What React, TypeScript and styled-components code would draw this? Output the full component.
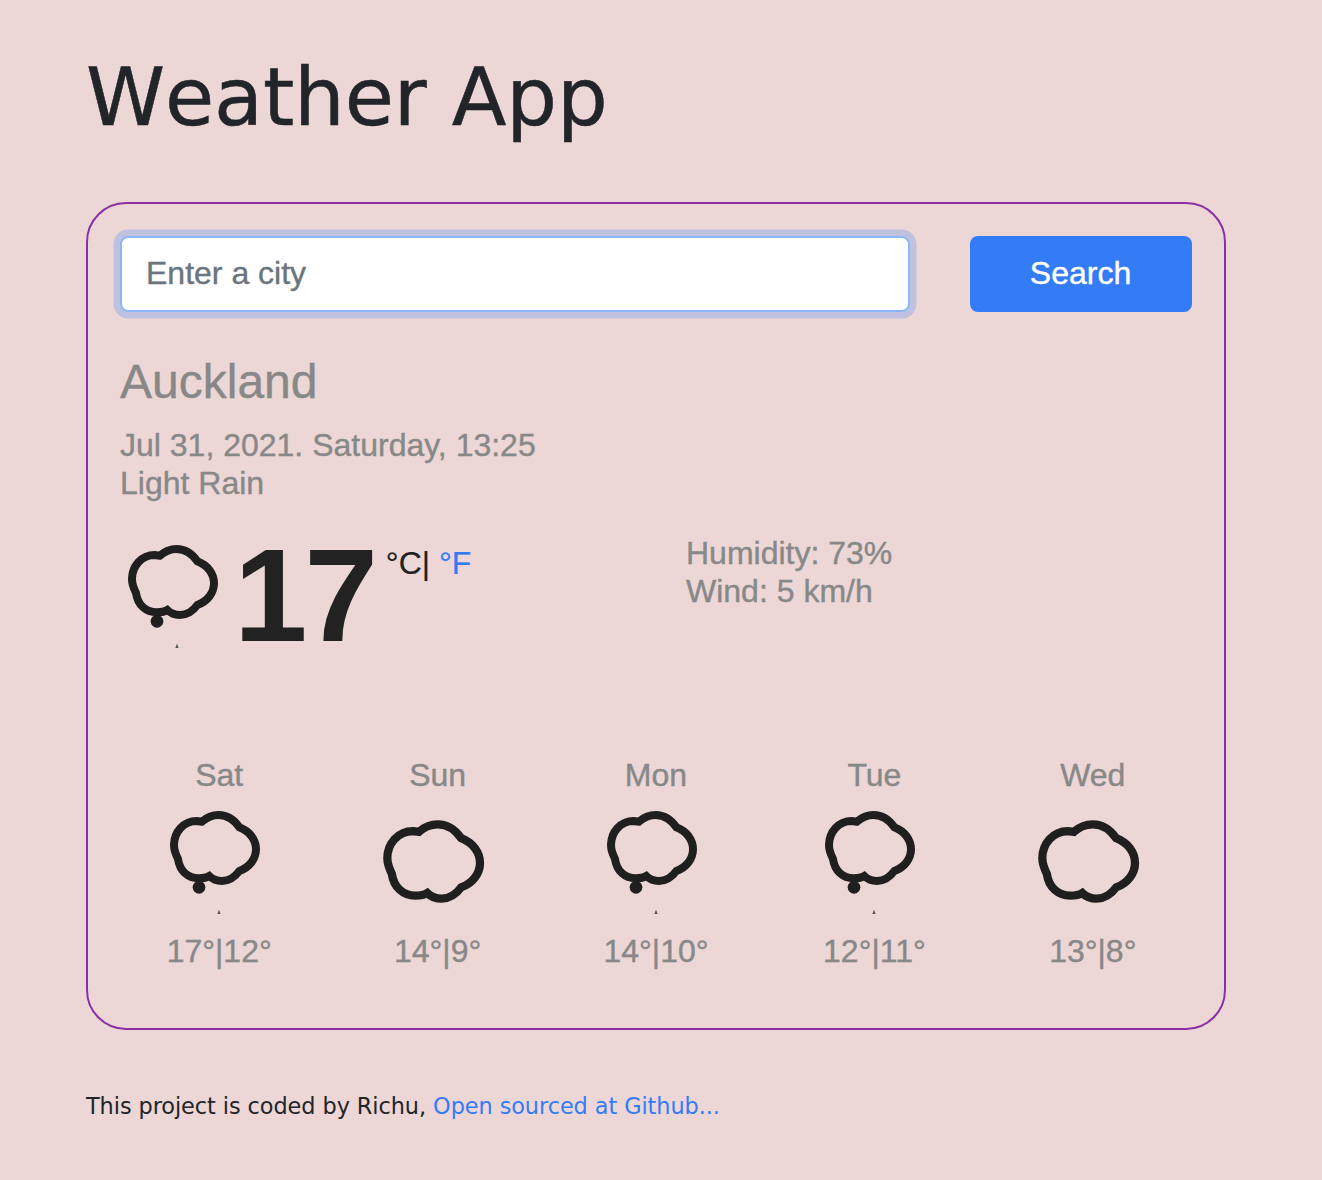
import React from "react";
import styled, { createGlobalStyle } from "styled-components";

const GlobalStyle = createGlobalStyle`
  *, *::before, *::after { box-sizing: border-box; }
  body {
    margin: 0;
    min-height: 1180px;
    background: #ecd7d6;
    color: #212529;
    font-family: "Liberation Sans", Arial, sans-serif;
    font-size: 32px;
    line-height: 38px;
  }
`;

const Page = styled.main`
  width: 1140px;
  margin-left: 86px;
  padding-top: 50px;
`;

const Title = styled.h1`
  margin: 0 0 56px;
  font: 400 80px/96px "DejaVu Sans", Verdana, sans-serif;
  font-kerning: none;
  letter-spacing: -0.15px;
  white-space: nowrap;
  -webkit-text-stroke: 0.5px;
`;

const Card = styled.section`
  height: 828px;
  padding: 32px;
  border: 2px solid #8a30a4;
  border-radius: 40px;
  color: #888888;
  -webkit-text-stroke: 0.4px;
`;

const SearchForm = styled.form`
  display: flex;
  gap: 60px;
  height: 76px;
  margin-bottom: 41px;
`;

const CityInput = styled.input`
  width: 790px;
  padding: 0 24px 2px;
  border: 2px solid #8ab9fb;
  border-radius: 8px;
  outline: none;
  background: #fff;
  box-shadow: 0 0 0 6.4px rgba(51, 124, 246, 0.24);
  font: inherit;
  &::placeholder { color: #6c757d; opacity: 1; }
`;

const SearchButton = styled.button`
  flex: 1;
  padding: 0 1px 2px 0;
  border: 0;
  border-radius: 8px;
  background: #347cf6;
  color: #fff;
  font: inherit;
`;

const City = styled.h2`
  margin: 0 0 15px;
  font-size: 48px;
  font-weight: 400;
  line-height: 58px;
`;

const Lines = styled.div`
  display: flex;
  flex-direction: column;
`;

const Current = styled.div`
  display: grid;
  grid-template-columns: 566px 1fr;
  height: 222px;
  padding-top: 32px;
`;

const Reading = styled.div`
  display: flex;
  align-items: flex-start;
  color: #222;
`;

const Degrees = styled.strong`
  margin: -2px 0 0 0;
  font-size: 132px;
  line-height: 128px;
  letter-spacing: -3px;
  -webkit-text-stroke: 0;
`;

const Units = styled.span`
  margin: 10px 0 0 11px;
  -webkit-text-stroke: 0.2px;
`;

const Link = styled.a`
  color: #347cf6;
  text-decoration: none;
`;

const Forecast = styled.div`
  display: grid;
  grid-template-columns: repeat(5, 1fr);
  margin: 32px -10px 0;
`;

const Day = styled.div`
  display: flex;
  flex-direction: column;
  align-items: center;
`;

const Icon = styled.svg<{ $top: number; $bottom: number }>`
  display: block;
  flex: none;
  width: 114px;
  height: 120px;
  margin: ${(p) => p.$top}px 0 ${(p) => p.$bottom}px;
`;

const Footer = styled.footer`
  margin-top: 59px;
  font: 22.4px/34px "DejaVu Sans", Verdana, sans-serif;
  letter-spacing: -0.07px;
  white-space: nowrap;
`;

type Sky = "rain" | "cloud";

interface IconProps {
  sky: Sky;
  top?: number;
  bottom?: number;
}

const cloudPath =
  "M120 62L104 60C64 60 36 94 36 132C36 148 41 160 48 174C53 210 78 232 110 232C124 232 134 230 142 225C152 235 166 240 180 240C202 240 218 229 232 210C263 199 282 173 282 145C282 116 263 91 232 79C215 54 196 42 170 42C149 42 133 50 120 62Z";

function WeatherIcon({ sky, top = 0, bottom = 0 }: IconProps) {
  return (
    <Icon $top={top} $bottom={bottom} viewBox="0 0 342 360" aria-hidden="true">
      {sky === "rain" ? (
        <g>
          <path d={cloudPath} fill="none" stroke="#1f1f1f" strokeWidth="24" />
          <circle cx="111" cy="259" r="19" fill="#1f1f1f" />
          <path d="M171 326L176 339H166Z" fill="#555" />
        </g>
      ) : (
        <path
          d={cloudPath}
          transform="translate(-21.7 22.5) scale(1.13 1.127)"
          fill="none"
          stroke="#1f1f1f"
          strokeWidth="22"
        />
      )}
    </Icon>
  );
}

const days: { name: string; sky: Sky; max: number; min: number }[] = [
  { name: "Sat", sky: "rain", max: 17, min: 12 },
  { name: "Sun", sky: "cloud", max: 14, min: 9 },
  { name: "Mon", sky: "rain", max: 14, min: 10 },
  { name: "Tue", sky: "rain", max: 12, min: 11 },
  { name: "Wed", sky: "cloud", max: 13, min: 8 },
];

export default function App() {
  return (
    <>
      <GlobalStyle />
      <Page>
        <Title>Weather App</Title>
        <Card>
          <SearchForm onSubmit={(e) => e.preventDefault()}>
            <CityInput placeholder="Enter a city" />
            <SearchButton>Search</SearchButton>
          </SearchForm>
          <City>Auckland</City>
          <Lines>
            <span>Jul 31, 2021. Saturday, 13:25</span>
            <span>Light Rain</span>
          </Lines>
          <Current>
            <Reading>
              <WeatherIcon sky="rain" top={1} />
              <Degrees>17</Degrees>
              <Units>
                °C| <Link href="#">°F</Link>
              </Units>
            </Reading>
            <Lines>
              <span>Humidity: 73%</span>
              <span>Wind: 5 km/h</span>
            </Lines>
          </Current>
          <Forecast>
            {days.map((d) => (
              <Day key={d.name}>
                <span>{d.name}</span>
                <WeatherIcon sky={d.sky} top={7} bottom={11} />
                <span>{`${d.max}°|${d.min}°`}</span>
              </Day>
            ))}
          </Forecast>
        </Card>
        <Footer>
          This project is coded by Richu, <Link href="#">Open sourced at Github...</Link>
        </Footer>
      </Page>
    </>
  );
}
